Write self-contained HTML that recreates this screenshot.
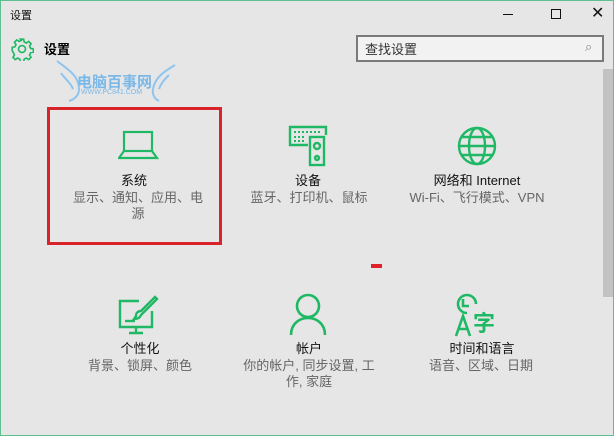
<!DOCTYPE html>
<html><head><meta charset="utf-8"><style>
*{margin:0;padding:0;box-sizing:border-box}
body{width:614px;height:436px;background:#e6e6e6;font-family:"Liberation Sans","Noto Sans CJK SC",sans-serif;position:relative;overflow:hidden;border:1px solid #5fbf8f}
.a{position:absolute}
.t{position:absolute;width:170px;text-align:center;font-size:13px;color:#111;line-height:16px}
.s{position:absolute;width:150px;text-align:center;font-size:13px;color:#666;line-height:16px}
</style></head><body>
<div class="a" style="left:9px;top:6px;font-size:11px;color:#111">设置</div>
<div class="a" style="left:502px;top:13px;width:10px;height:1px;background:#111"></div>
<div class="a" style="left:550px;top:8px;width:10px;height:10px;border:1px solid #111"></div>
<div class="a" style="left:590px;top:2px;font-size:16px;color:#111">✕</div>
<svg class="a" style="left:9px;top:36px" width="24" height="24" viewBox="0 0 22 22"><g fill="none" stroke="#1fb864" stroke-width="1.5"><circle cx="11" cy="11" r="3.2"/><path d="M9.5 2h3l.5 2.5 2 1 2.2-1.4 2.1 2.1-1.4 2.2 1 2 2.5.5v3l-2.5.5-1 2 1.4 2.2-2.1 2.1-2.2-1.4-2 1-.5 2.5h-3l-.5-2.5-2-1-2.2 1.4-2.1-2.1 1.4-2.2-1-2L2 12.5v-3l2.5-.5 1-2-1.4-2.2 2.1-2.1 2.2 1.4 2-1z"/></g></svg>
<div class="a" style="left:43px;top:38px;font-size:13px;font-weight:bold;color:#000">设置</div>
<div class="a" style="left:355px;top:34px;width:248px;height:27px;border:2px solid #7a7a7a;background:#f2f2f2"></div>
<div class="a" style="left:364px;top:38px;font-size:13px;color:#333">查找设置</div>
<div class="a" style="left:584px;top:38px;font-size:13px;color:#888">⌕</div>
<svg class="a" style="left:48px;top:52px" width="130" height="50" viewBox="0 0 130 50"><g fill="none" stroke="#8ec4ee" stroke-width="2"><path d="M8 8c10 8 22 14 22 28c0 6-4 10-10 12"/><path d="M12 20c4 6 10 10 12 16"/><path d="M126 12c-10 6-20 12-22 24c-1 6 2 10 6 12"/><path d="M120 22c-4 4-8 8-10 14"/></g></svg>
<div class="a" style="left:76px;top:70px;font-size:15px;font-weight:bold;color:#7ab8e8">电脑百事网</div>
<div class="a" style="left:80px;top:88px;font-size:7px;color:#7ab8e8">WWW.PC841.COM</div>
<div class="a" style="left:602px;top:68px;width:10px;height:228px;background:#c2c2c2"></div>
<div class="a" style="left:46px;top:106px;width:175px;height:138px;border:3px solid #d9232a"></div>
<div class="a" style="left:370px;top:263px;width:11px;height:4px;background:#e0202a"></div>
<svg class="a" style="left:117px;top:128px" width="42" height="32" viewBox="0 0 42 32"><g fill="none" stroke="#1fb864" stroke-width="2.2"><rect x="6" y="3" width="28" height="19"/><path d="M6 22L1 29h38l-5-7"/></g></svg>
<svg class="a" style="left:287px;top:124px" width="44" height="42" viewBox="0 0 44 42"><g fill="none" stroke="#1fb864" stroke-width="2.4"><path d="M20 20H2V2h36v8"/><rect x="22" y="12" width="14" height="28"/><circle cx="29" cy="21" r="3"/><circle cx="29" cy="33" r="2"/></g><path d="M6 7h28M6 12h12M6 16h12" stroke="#1fb864" stroke-width="2" stroke-dasharray="2 2"/></svg>
<svg class="a" style="left:455px;top:124px" width="42" height="42" viewBox="0 0 42 42"><g fill="none" stroke="#1fb864" stroke-width="2.4"><circle cx="21" cy="21" r="18"/><ellipse cx="21" cy="21" rx="8" ry="18"/><path d="M3 21h36M6 12h30M6 30h30"/></g></svg>
<div class="t" style="left:48px;top:172px">系统</div>
<div class="s" style="left:62px;top:189px">显示、通知、应用、电<br>源</div>
<div class="t" style="left:222px;top:172px">设备</div>
<div class="s" style="left:233px;top:189px">蓝牙、打印机、鼠标</div>
<div class="t" style="left:391px;top:172px">网络和 Internet</div>
<div class="s" style="left:401px;top:189px;width:150px">Wi-Fi、飞行模式、VPN</div>
<svg class="a" style="left:116px;top:294px" width="42" height="40" viewBox="0 0 42 40"><g fill="none" stroke="#1fb864" stroke-width="2.4"><path d="M22 6H3v26h32V16"/><path d="M19 32v5M12 38h14"/><path d="M38 2L24 16c-3 0-5 2-5 5l-2 3c3 0 6-1 7-4L40 4z"/><path d="M8 26h10"/></g></svg>
<svg class="a" style="left:287px;top:291px" width="40" height="44" viewBox="0 0 40 44"><g fill="none" stroke="#1fb864" stroke-width="2.6"><circle cx="20" cy="14" r="11"/><path d="M3 43c0-11 8-17 17-17s17 6 17 17"/></g></svg>
<svg class="a" style="left:452px;top:292px" width="44" height="44" viewBox="0 0 44 44"><g fill="none" stroke="#1fb864" stroke-width="2.6"><path d="M14 20a9 9 0 1 1 9-9"/><path d="M10 6v7h6"/><path d="M3 43l7-20 7 20M5.5 36h9"/></g><text x="20" y="38" font-size="22" font-weight="bold" fill="#1fb864" font-family="Noto Sans CJK SC,sans-serif">字</text></svg>
<div class="t" style="left:54px;top:340px">个性化</div>
<div class="s" style="left:64px;top:357px">背景、锁屏、颜色</div>
<div class="t" style="left:223px;top:340px">帐户</div>
<div class="s" style="left:233px;top:357px">你的帐户, 同步设置, 工<br>作, 家庭</div>
<div class="t" style="left:396px;top:340px">时间和语言</div>
<div class="s" style="left:405px;top:357px">语音、区域、日期</div>
</body></html>
